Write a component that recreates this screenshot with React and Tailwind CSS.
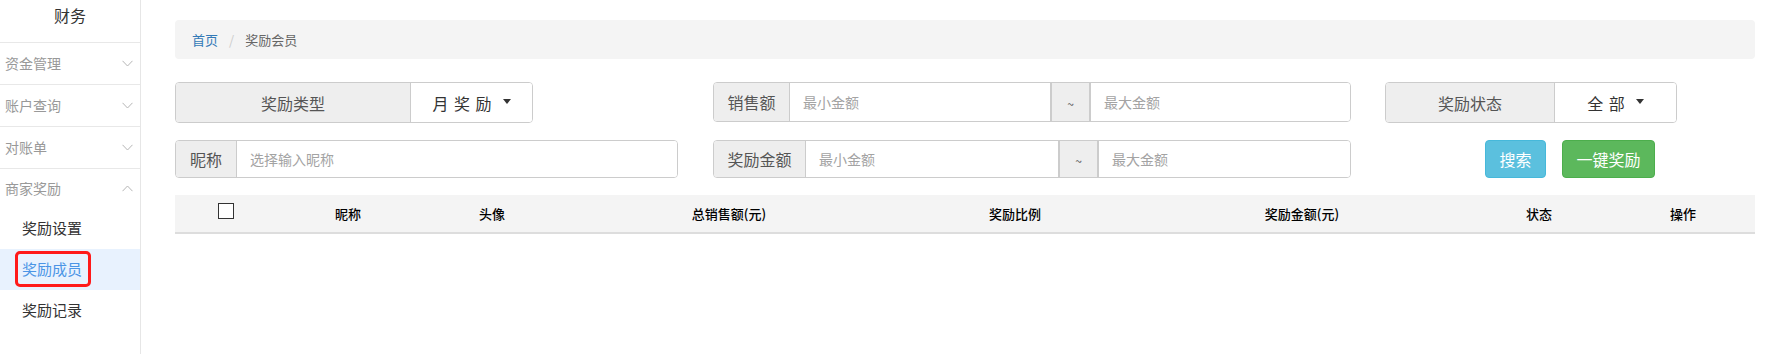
import React from "react";

const FONT = { fontFamily: '"Noto Sans CJK SC", "Microsoft YaHei", "Liberation Sans", sans-serif' };

function Chevron({ up }) {
  return (
    <svg width="11" height="7" viewBox="0 0 11 7" fill="none" className="text-[#b5b5b5]">
      {up ? (
        <path d="M0.5 6.2 L5.5 1 L10.5 6.2" stroke="currentColor" strokeWidth="1" />
      ) : (
        <path d="M0.5 0.8 L5.5 6 L10.5 0.8" stroke="currentColor" strokeWidth="1" />
      )}
    </svg>
  );
}

function Caret() {
  return <span className="inline-block w-0 h-0 border-t-[5px] border-t-[#333] border-x-[4px] border-x-transparent ml-[10px] mb-[2px]" />;
}

function SelectGroup({ label, value, labelW, selW }) {
  return (
    <div className="flex h-[41px] border border-[#ccc] rounded-[4px] overflow-hidden">
      <div className={`${labelW} bg-[#eee] border-r border-[#ccc] flex items-center justify-center text-[16px] text-[#555]`}>{label}</div>
      <div className={`${selW} bg-white flex items-center justify-center text-[16px] text-[#333]`}>
        <span className="tracking-[1px]">{value}</span>
        <Caret />
      </div>
    </div>
  );
}

function RangeGroup({ label, labelW, inputW, tildeW }) {
  return (
    <div className="flex h-full border border-[#ccc] rounded-[4px] overflow-hidden w-[638px]">
      <div className={`${labelW} bg-[#eee] border-r border-[#ccc] flex items-center justify-center text-[16px] text-[#555]`}>{label}</div>
      <div className={`${inputW} bg-white flex items-center pl-[13px] text-[14px] text-[#a3a3a3]`}>最小金额</div>
      <div className={`${tildeW} bg-[#eee] border-x-2 border-[#ccc] flex items-center justify-center text-[12px] text-[#555] pt-[3px]`}>~</div>
      <div className="flex-1 bg-white flex items-center pl-[13px] text-[14px] text-[#a3a3a3]">最大金额</div>
    </div>
  );
}

export default function App() {
  const menu = [
    { t: "资金管理" },
    { t: "账户查询" },
    { t: "对账单" },
  ];
  const cols = ["昵称", "头像", "总销售额(元)", "奖励比例", "奖励金额(元)", "状态", "操作"];
  return (
    <div className="flex h-screen bg-white" style={FONT}>
      <aside className="w-[141px] shrink-0 border-r border-[#e6e6e6] h-full">
        <div className="h-[43px] border-b border-[#e8e8e8] flex justify-center pt-[4px] leading-[22px] text-[16px] text-[#333]">财务</div>
        {menu.map((m) => (
          <div key={m.t} className="h-[42px] border-b border-[#e8e8e8] flex items-center justify-between pl-[5px] pr-[7px] text-[14px] text-[#999]">
            <span>{m.t}</span>
            <Chevron />
          </div>
        ))}
        <div className="h-[39px] flex items-center justify-between pl-[5px] pr-[7px] text-[14px] text-[#999]">
          <span>商家奖励</span>
          <Chevron up />
        </div>
        <div className="h-[41px] flex items-center pl-[22px] text-[15px] text-[#333]">奖励设置</div>
        <div className="relative h-[41px] flex items-center pl-[22px] text-[15px] text-[#4b95e6] bg-[#e8f2fe]">
          奖励成员
          <div className="absolute left-[15px] top-[2px] w-[76px] h-[36px] border-[3px] border-[#ff1a1a] rounded-[5px]" />
        </div>
        <div className="h-[41px] flex items-center pl-[22px] text-[15px] text-[#333]">奖励记录</div>
      </aside>

      <main className="flex-1 pl-[34px] pr-[19px] pt-[20px]">
        <div className="h-[39px] bg-[#f4f4f4] rounded-[4px] flex items-center pl-[17px] text-[13px]">
          <span className="text-[#337ab7]">首页</span>
          <span className="text-[#ccc] px-[11px]">/</span>
          <span className="text-[#666]">奖励会员</span>
        </div>

        <div className="mt-[23px] grid grid-cols-[538px_672px_1fr] gap-y-[17px]">
          <div className="w-[358px]">
            <SelectGroup label="奖励类型" value="月 奖 励" labelW="w-[235px]" selW="flex-1" />
          </div>
          <div className="h-[40px]">
            <RangeGroup label="销售额" labelW="w-[76px]" inputW="w-[260px]" tildeW="w-[41px]" />
          </div>
          <div className="w-[292px]">
            <SelectGroup label="奖励状态" value="全 部" labelW="w-[169px]" selW="flex-1" />
          </div>

          <div className="w-[503px] h-[38px] flex border border-[#ccc] rounded-[4px] overflow-hidden">
            <div className="w-[61px] bg-[#eee] border-r border-[#ccc] flex items-center justify-center text-[16px] text-[#555]">昵称</div>
            <div className="flex-1 bg-white flex items-center pl-[13px] text-[14px] text-[#a3a3a3]">选择输入昵称</div>
          </div>
          <div className="h-[38px]">
            <RangeGroup label="奖励金额" labelW="w-[92px]" inputW="w-[252px]" tildeW="w-[41px]" />
          </div>
          <div className="flex h-[38px] pl-[100px] gap-[16px]">
            <button className="w-[61px] h-full bg-[#5bc0de] border border-[#46b8da] rounded-[4px] text-white text-[16px]">搜索</button>
            <button className="w-[93px] h-full bg-[#5cb85c] border border-[#4cae4c] rounded-[4px] text-white text-[16px]">一键奖励</button>
          </div>
        </div>

        <div className="mt-[17px] h-[39px] bg-[#f4f4f4] border-b-2 border-[#ddd] grid grid-cols-[102px_142px_146px_328px_244px_330px_144px_144px] items-center text-[13px] text-black font-medium">
          <div className="flex justify-center">
            <span className="w-[16px] h-[16px] border border-[#333] bg-white inline-block mb-[6px]" />
          </div>
          {cols.map((c) => (
            <div key={c} className="text-center">{c}</div>
          ))}
        </div>
      </main>
    </div>
  );
}
